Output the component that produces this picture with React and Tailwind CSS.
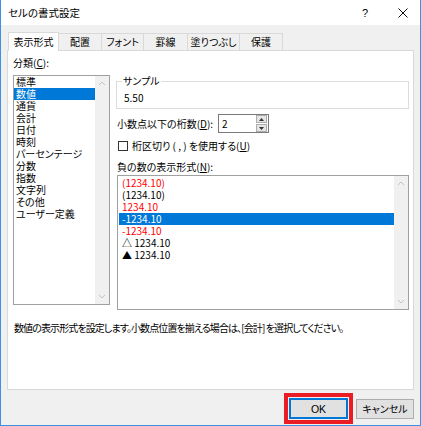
import React from 'react';

const categories = ['標準', '数値', '通貨', '会計', '日付', '時刻', 'パーセンテージ', '分数', '指数', '文字列', 'その他', 'ユーザー定義'];

const negatives = [
  { label: '(1234.10)', red: true },
  { label: '(1234.10)', red: false },
  { label: '1234.10', red: true },
  { label: '-1234.10', red: false, selected: true },
  { label: '-1234.10', red: true },
  { label: '△ 1234.10', red: false },
  { label: '▲ 1234.10', red: false },
];

const tabs = ['表示形式', '配置', 'フォント', '罫線', '塗りつぶし', '保護'];
const tabWidths = ['w-[51px]', 'w-[43px]', 'w-[42px]', 'w-[44px]', 'w-[52px]', 'w-[43px]'];

const Chevron = ({ down }) => (
  <svg width="8" height="5" viewBox="0 0 8 5" className="block">
    <path d={down ? 'M1 1 L4 4 L7 1' : 'M1 4 L4 1 L7 4'} fill="none" stroke="#c2c2c2" strokeWidth="1" />
  </svg>
);

// disabled vertical scrollbar on the right of a list
const ScrollBar = () => (
  <div className="w-[14px] shrink-0 bg-[#f0f0f0] flex flex-col justify-between items-center py-[5px]">
    <Chevron />
    <Chevron down />
  </div>
);

const Acc = ({ children }) => <span className="underline underline-offset-1">{children}</span>;

const App = () => {
  return (
    <div className="w-[421px] h-[426px] flex flex-col border-x border-b border-[#3a92e0] bg-[#f0f0f0] text-[10px] leading-[12px] text-black font-['Noto_Sans_CJK_JP',sans-serif] [font-feature-settings:'palt'] overflow-hidden">
      {/* Title bar */}
      <div className="h-[25px] shrink-0 bg-white flex items-center pl-[7px] pr-[12px]">
        <span className="text-[10.5px]">セルの書式設定</span>
        <span className="ml-auto mr-[30px] text-[11px] font-['Liberation_Sans',sans-serif]">?</span>
        <svg width="10" height="10" viewBox="0 0 10 10">
          <path d="M0.5 0.5 L9.5 9.5 M9.5 0.5 L0.5 9.5" stroke="#111" strokeWidth="1" />
        </svg>
      </div>

      <div className="flex-1 flex flex-col px-[6px] pt-[7px]">
        {/* Tabs */}
        <div className="flex items-end ml-px relative z-10">
          {tabs.map((t, i) => (
            <div
              key={t}
              className={
                i === 0
                  ? `${tabWidths[i]} h-[19px] -mb-px bg-white border border-b-0 border-[#d9d9d9] flex items-center justify-center`
                  : `${tabWidths[i]} h-[17px] bg-[#f0f0f0] border border-l-0 border-b-0 border-[#d9d9d9] flex items-center justify-center`
              }
            >
              {t}
            </div>
          ))}
        </div>

        {/* Panel */}
        <div className="h-[340px] bg-white border border-[#d9d9d9] pl-[5px] pr-[4px] pt-[6px] flex flex-col">
          <div className="flex gap-[6px]">
            {/* Category list */}
            <div className="w-[97px] shrink-0">
              <div className="h-[12px] mb-[6px]">分類(<Acc>C</Acc>):</div>
              <div className="h-[230px] border border-[#a0a0a0] flex">
                <div className="flex-1">
                  {categories.map((c, i) => (
                    <div
                      key={c}
                      className={i === 1 ? 'h-[12px] pl-[2px] bg-[#0078d7] text-white' : 'h-[12px] pl-[2px]'}
                    >
                      {c}
                    </div>
                  ))}
                </div>
                <ScrollBar />
              </div>
            </div>

            {/* Right column */}
            <div className="flex-1 pt-[18px]">
              <fieldset className="h-[34px] border border-[#dcdcdc] px-[5px]">
                <legend className="px-px h-[12px]">サンプル</legend>
                <div className="pl-[2px] pt-[5px]">5.50</div>
              </fieldset>

              <div className="mt-[5px] flex items-center h-[19px] pl-px">
                <span className="w-[101px]">小数点以下の桁数(<Acc>D</Acc>):</span>
                <div className="w-[51px] h-[19px] border border-[#7a7a7a] flex items-center">
                  <span className="flex-1 pl-[3px]">2</span>
                  <div className="w-[11px] h-[17px] mr-px flex flex-col gap-px">
                    <div className="flex-1 bg-[#e5e5e5] border border-[#adadad] flex items-center justify-center">
                      <svg width="5" height="3" viewBox="0 0 5 3"><path d="M0 3 L2.5 0 L5 3 Z" fill="#333" /></svg>
                    </div>
                    <div className="flex-1 bg-[#e5e5e5] border border-[#adadad] flex items-center justify-center">
                      <svg width="5" height="3" viewBox="0 0 5 3"><path d="M0 0 L2.5 3 L5 0 Z" fill="#333" /></svg>
                    </div>
                  </div>
                </div>
              </div>

              <div className="mt-[7px] flex items-center h-[12px] pl-[2px]">
                <div className="w-[10px] h-[10px] border border-[#333] bg-white mr-[4px]" />
                <span>桁区切り ( , ) を使用する(<Acc>U</Acc>)</span>
              </div>

              <div className="mt-[9px] h-[12px] pl-px">負の数の表示形式(<Acc>N</Acc>):</div>

              <div className="mt-[2px] ml-px h-[135px] border border-[#a0a0a0] flex">
                <div className="flex-1 pt-px pl-px">
                  {negatives.map((n, i) => (
                    <div
                      key={i}
                      className={
                        n.selected
                          ? 'h-[12px] pl-[3px] bg-[#0078d7] text-white'
                          : n.red
                          ? 'h-[12px] pl-[3px] text-[#ff0000]'
                          : 'h-[12px] pl-[3px]'
                      }
                    >
                      {n.label}
                    </div>
                  ))}
                </div>
                <ScrollBar />
              </div>
            </div>
          </div>

          <div className="mt-[12px] pl-px tracking-[-0.9px]">
            数値の表示形式を設定します。小数点位置を揃える場合は、[会計] を選択してください。
          </div>
        </div>

        {/* Buttons */}
        <div className="mt-[3px] flex justify-end items-start gap-[3px]">
          <div className="w-[69px] h-[31px] border-4 border-[#ea1c24] p-px">
            <div className="h-full border-2 border-[#0078d7] bg-[#e1e1e1] flex items-center justify-center">
              <span className="font-['Liberation_Sans',sans-serif] text-[10.5px]">OK</span>
            </div>
          </div>
          <div className="mt-[6px] w-[58px] h-[20px] border border-[#adadad] bg-[#e1e1e1] flex items-center justify-center">
            キャンセル
          </div>
        </div>
      </div>
    </div>
  );
};

export default App;
